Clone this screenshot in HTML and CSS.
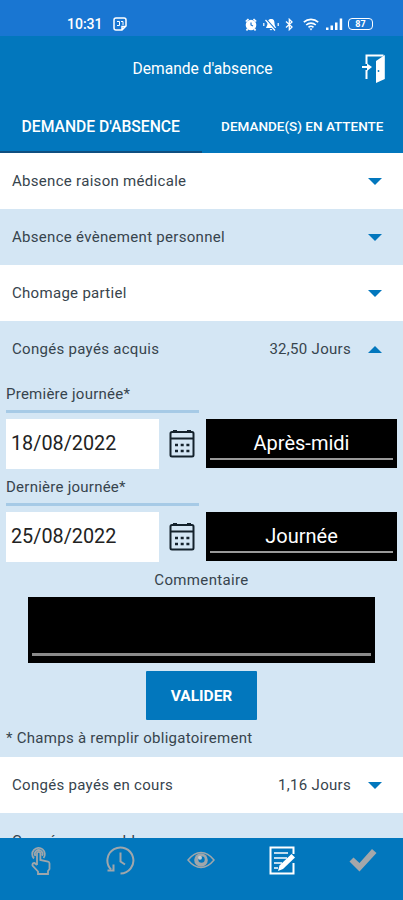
FILE: index.html
```html
<!DOCTYPE html>
<html lang="fr">

<head>
    <meta charset="UTF-8">
    <meta name="viewport" content="width=device-width, initial-scale=1.0">
    <title>Demande d'absence</title>
    <link rel="stylesheet" href="styles.css">
</head>

<body>
    <div class="status-bar">
        <span class="time">10:31</span>
        <svg class="note" width="14" height="14" viewBox="0 0 14 14" fill="none" stroke="#fff" stroke-width="1.5">
            <path d="M3 1h8a2 2 0 0 1 2 2v6l-4 4H3a2 2 0 0 1-2-2V3a2 2 0 0 1 2-2zM9 13V9.500h4" />
            <path d="M4 4.500h2.500v4H4M8 4.500h2V8" stroke-width="1" />
        </svg>
        <div class="status-icons">
            <svg width="12" height="13" viewBox="0 0 12 13">
                <circle cx="6" cy="7" r="5.300" fill="#fff" />
                <path d="M.8 3.500L3.500 1M11.200 3.500L8.500 1M2.500 11l-1 1.500M9.500 11l1 1.500" stroke="#fff" stroke-width="1.700" />
                <path d="M6 4.500V7l2 1" fill="none" stroke="#1976d2" stroke-width="1.200" />
            </svg>
            <svg width="16" height="13" viewBox="0 0 16 13">
                <path d="M8 1c-3 0-3.500 2.500-3.500 4.500S3 9 3 10h10c0-1-1.500-2-1.500-4.500S11 1 8 1zM6.500 11h3l-1.500 1.500z" fill="#fff" />
                <path d="M3.500 1.500l9 10" stroke="#1976d2" stroke-width="1.200" />
                <path d="M2.500 2l9.500 10.500M.8 5v3M15.200 5v3" stroke="#fff" stroke-width="1.200" />
            </svg>
            <svg width="9" height="13" viewBox="0 0 9 13" fill="none" stroke="#fff" stroke-width="1.300">
                <path d="M1 3.500l6 5.500-2.700 2.700V1.300L7 4 1 9.500" />
            </svg>
            <svg class="wifi" width="16" height="13" viewBox="0 0 16 13" fill="none" stroke="#fff" stroke-width="1.600">
                <path d="M.8 4.200a10.500 10.500 0 0 1 14.400 0M3.200 7a7 7 0 0 1 9.600 0M5.500 9.400a3.700 3.700 0 0 1 5 0" />
                <path d="M6.500 10.500h3L8 12.500z" fill="#fff" stroke="none" />
            </svg>
            <svg class="signal" width="17" height="13" viewBox="0 0 17 13" fill="#fff">
                <path d="M0 9.500h2.500V12H0zM4.500 7.500H7V12H4.500zM9 4.500h2.500V12H9zM13.700.5h2.500V12h-2.500z" />
            </svg>
            <span class="battery">87</span>
        </div>
    </div>

    <header class="header">
        <h1>Demande d'absence</h1>
        <svg class="exit" width="24" height="30" viewBox="0 0 24 30">
            <path d="M4.500 10V1.500h17M4.500 16v9" fill="none" stroke="#fff" stroke-width="2" />
            <path d="M22.800 1v24L14 29V7z" fill="#fff" />
            <path d="M0 13h6" stroke="#fff" stroke-width="2" />
            <path d="M5 9.500l5 3.500-5 4z" fill="#fff" />
            <circle cx="16.500" cy="17" r=".9" fill="#0277bd" />
        </svg>
    </header>

    <nav class="tabs">
        <a class="tab active">DEMANDE D'ABSENCE</a>
        <a class="tab">DEMANDE(S) EN ATTENTE</a>
    </nav>

    <main class="list">
        <div class="row">
            <span class="label">Absence raison médicale</span>
            <span class="arrow"></span>
        </div>
        <div class="row blue">
            <span class="label">Absence évènement personnel</span>
            <span class="arrow"></span>
        </div>
        <div class="row">
            <span class="label">Chomage partiel</span>
            <span class="arrow"></span>
        </div>
        <div class="row blue">
            <span class="label">Congés payés acquis</span>
            <span class="days">32,50 Jours</span>
            <span class="arrow up"></span>
        </div>

        <form class="details">
            <label class="field-title">Première journée*</label>
            <div class="field">
                <div class="date">18/08/2022</div>
                <svg class="calendar" width="26" height="29" viewBox="0 0 26 29">
                    <rect x="1.500" y="3" width="23" height="24.500" rx="1.500" fill="none" stroke="#14222c" stroke-width="2" />
                    <path d="M1.500 9.500h23M4 2.200h4M18 2.200h4" stroke="#14222c" stroke-width="2.200" />
                    <path d="M6 1v3M20 1v3" stroke="#14222c" stroke-width="2.500" />
                    <path d="M6 16h14.500M6 22h14.500" stroke="#14222c" stroke-width="2.600" stroke-dasharray="3 2.700" />
                </svg>
                <div class="period"><span>Après-midi</span></div>
            </div>
            <label class="field-title">Dernière journée*</label>
            <div class="field">
                <div class="date">25/08/2022</div>
                <svg class="calendar" width="26" height="29" viewBox="0 0 26 29">
                    <rect x="1.500" y="3" width="23" height="24.500" rx="1.500" fill="none" stroke="#14222c" stroke-width="2" />
                    <path d="M1.500 9.500h23M4 2.200h4M18 2.200h4" stroke="#14222c" stroke-width="2.200" />
                    <path d="M6 1v3M20 1v3" stroke="#14222c" stroke-width="2.500" />
                    <path d="M6 16h14.500M6 22h14.500" stroke="#14222c" stroke-width="2.600" stroke-dasharray="3 2.700" />
                </svg>
                <div class="period"><span>Journée</span></div>
            </div>
            <label class="comment-title">Commentaire</label>
            <div class="comment"></div>
            <button type="button" class="submit">VALIDER</button>
            <p class="required">* Champs à remplir obligatoirement</p>
        </form>

        <div class="row">
            <span class="label">Congés payés en cours</span>
            <span class="days">1,16 Jours</span>
            <span class="arrow"></span>
        </div>
        <div class="row blue">
            <span class="label">Congés sans solde</span>
            <span class="arrow"></span>
        </div>
    </main>

    <nav class="bottom-nav">
        <a>
            <svg class="touch" width="20" height="29" viewBox="0 0 20 29" fill="none" stroke="#9fa6ab" stroke-width="1.800">
                <path d="M3 12.500a6.300 6.300 0 1 1 9.500-.5M4.500 10a3.800 3.800 0 1 1 6.500-.3" />
                <path d="M6 19V7.500a1.700 1.700 0 0 1 3.400 0V14l7.600 1.500q1.500.5 1.500 2V23l-1.500 2v3H7v-2.500L1.500 19.500Q1 17 3.500 17L6 19" />
            </svg>
        </a>
        <a>
            <svg width="30" height="29" viewBox="0 0 30 29" fill="none" stroke="#9fa6ab" stroke-width="2">
                <path d="M5 23.500A13 13 0 1 1 14.500 27.500" />
                <path d="M14.500 6.500v9l4.500 3" />
                <path d="M1.500 24.500h6v-6" />
            </svg>
        </a>
        <a>
            <svg width="28" height="18" viewBox="0 0 28 18">
                <path d="M1 9q6-7.500 13-7.500T27 9q-6 7.500-13 7.500T1 9z" fill="none" stroke="#9fa6ab" stroke-width="1.500" />
                <circle cx="14" cy="9" r="6.800" fill="#9fa6ab" />
                <circle cx="14.500" cy="8.500" r="3.200" fill="#0277bd" />
                <circle cx="13" cy="6.800" r="2" fill="#c8cdd0" />
            </svg>
        </a>
        <a>
            <svg width="27" height="29" viewBox="0 0 27 29">
                <path d="M24.500 8V1.500h-23v26h23V17" fill="none" stroke="#fff" stroke-width="2" />
                <path d="M5 7h14M5 12h13M5 17h8M5 22h4" stroke="#fff" stroke-width="1.700" />
                <path d="M22.500 8l3.500 3.500-12 11.500-5 2 1.500-5.500z" fill="#fff" />
            </svg>
        </a>
        <a>
            <svg width="28" height="24" viewBox="0 0 28 24">
                <path d="M.5 13.500l4-4 6 5.500L23 1l4.500 4-17 18.500z" fill="#a5a7aa" />
            </svg>
        </a>
    </nav>
</body>

</html>
```
FILE: styles.css
```css
* {
    box-sizing: border-box;
}

body {
    margin: 0;
    height: 900px;
    display: flex;
    flex-direction: column;
    overflow: hidden;
    font-family: Roboto, sans-serif;
    font-size: 15px;
    color: #37444d;
    background-color: #fff;
}

svg {
    display: block;
    flex: none;
}

/* barre de statut */
.status-bar {
    flex: none;
    display: flex;
    align-items: center;
    height: 36px;
    padding: 12px 30px 0 67px;
    background-color: #1976d2;
    color: #fff;
}

.time {
    width: 46px;
    font-size: 14px;
    font-weight: 500;
}

.status-icons {
    display: flex;
    align-items: center;
    gap: 6px;
    margin-left: auto;
}

.wifi {
    margin-left: 3px;
}

.signal {
    margin-left: 1px;
}

.battery {
    width: 25px;
    height: 12px;
    margin-left: -1px;
    border: 1px solid #fff;
    border-radius: 4px;
    font-size: 9px;
    line-height: 10px;
    font-weight: 700;
    text-align: center;
}

/* titre */
.header {
    flex: none;
    display: grid;
    grid-template-columns: 1fr auto 1fr;
    align-items: center;
    height: 65px;
    padding: 0 17px 0 18px;
    background-color: #0277bd;
    color: #fff;
}

.header h1 {
    grid-column: 2;
    margin: 0;
    padding-left: 1px;
    font-size: 15.6px;
    font-weight: 400;
}

.exit {
    justify-self: end;
}

/* onglets */
.tabs {
    flex: none;
    display: flex;
    height: 52px;
    background-color: #0277bd;
    color: #fff;
}

.tab {
    display: flex;
    align-items: center;
    justify-content: center;
    width: 50%;
    border-bottom: 2px solid #0277bd;
    font-size: 13.5px;
    font-weight: 500;
}

.tab.active {
    border-color: #0f4f80;
    font-size: 15.7px;
}

/* liste des absences */
.list {
    flex: 1;
    min-height: 0;
    overflow: hidden;
}

.row {
    display: flex;
    align-items: center;
    height: 56px;
    padding: 0 21px 0 12px;
    letter-spacing: 0.3px;
}

.blue {
    background-color: #d4e6f4;
}

.label {
    flex: 1;
}

.arrow {
    margin-left: 17px;
    border: 7px solid transparent;
    border-top-color: #0277bd;
    border-bottom: 0;
}

.arrow.up {
    border-top: 0;
    border-bottom: 7px solid #0277bd;
}

/* formulaire */
.details {
    display: flex;
    flex-direction: column;
    height: 380px;
    padding: 0 6px;
    background-color: #d4e6f4;
}

.field-title {
    width: 193px;
    height: 36px;
    padding-top: 8px;
    border-bottom: 3px solid #a6cae6;
    line-height: 18px;
    letter-spacing: 0.25px;
}

.field {
    display: flex;
    align-items: center;
    height: 50px;
    margin: 6px 0 1px;
}

.date {
    width: 153px;
    height: 50px;
    padding-left: 5px;
    background-color: #fff;
    color: #222;
    font-size: 19.8px;
    line-height: 50px;
}

.calendar {
    margin: 0 11px 0 10px;
}

.period {
    flex: 1;
    height: 49px;
    padding: 0 4px;
    background-color: #000;
    color: #fff;
    font-size: 20px;
    line-height: 49px;
    text-align: center;
}

.period span {
    display: block;
    height: 41px;
    border-bottom: 2px solid #999;
}

.comment-title {
    height: 34px;
    line-height: 34px;
    text-align: center;
    letter-spacing: 0.35px;
}

.comment {
    display: flex;
    height: 67px;
    margin: 0 22px;
    padding: 0 4px 7px;
    background-color: #000;
}

.comment::after {
    content: "";
    flex: 1;
    border-bottom: 3px solid #8a8a8a;
}

.submit {
    align-self: center;
    width: 111px;
    height: 49px;
    margin-top: 8px;
    padding: 0;
    border: 0;
    border-radius: 1px;
    background-color: #0277bd;
    color: #fff;
    font: 700 15.5px Roboto, sans-serif;
}

.required {
    margin: 0;
    line-height: 37px;
    letter-spacing: 0.28px;
}

/* navigation du bas */
.bottom-nav {
    flex: none;
    display: flex;
    height: 62px;
    background-color: #0277bd;
}

.bottom-nav a {
    display: flex;
    flex: 1;
    align-items: center;
    justify-content: center;
    height: 44px;
}

.touch {
    margin-left: 2px;
}
```
